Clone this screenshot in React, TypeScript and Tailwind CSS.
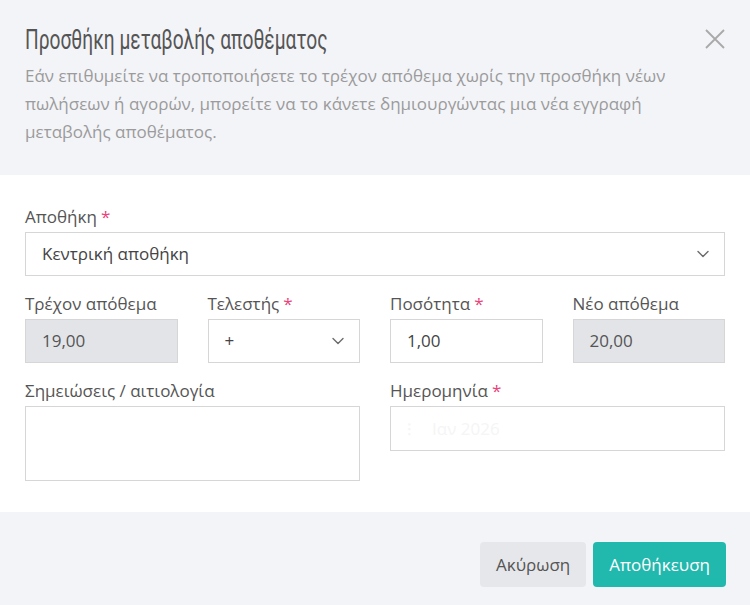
import React from "react";

const Star = () => <span className="text-[#e8437a] ml-[4px]">*</span>;

const Chevron = () => (
  <svg width="14" height="14" viewBox="0 0 14 14" fill="none" stroke="#6b6b6b" strokeWidth="1.4" strokeLinecap="round" strokeLinejoin="round">
    <path d="M2 4.5 L7 9.5 L12 4.5" />
  </svg>
);

export default function App() {
  return (
    <div className="w-[750px] h-[605px] flex flex-col bg-white font-['Open_Sans',sans-serif] text-[17px]">
      <div className="bg-[#f3f4f8] px-[25px] pt-[24px] pb-[29px] h-[175px]">
        <div className="flex items-start justify-between">
          <h1 className="font-['Roboto',sans-serif] text-[28px] leading-[32px] text-[#555555] scale-x-[0.685] origin-left whitespace-nowrap">
            Προσθήκη μεταβολής αποθέματος
          </h1>
          <svg width="24" height="24" viewBox="0 0 24 24" fill="none" stroke="#a9a9a9" strokeWidth="1.8" className="mt-[3px] mr-[-2px]">
            <path d="M3 3 L21 21 M21 3 L3 21" />
          </svg>
        </div>
        <p className="mt-[6px] text-[#9b9b9b] leading-[28px] text-[17px]">
          Εάν επιθυμείτε να τροποποιήσετε το τρέχον απόθεμα χωρίς την προσθήκη νέων πωλήσεων ή αγορών, μπορείτε να το κάνετε δημιουργώντας μια νέα εγγραφή μεταβολής αποθέματος.
        </p>
      </div>

      <div className="px-[25px] pt-[30px] pb-[31px] text-[#555555]">
        <div>
          <div className="h-6 leading-6 mb-[3px]">Αποθήκη<Star /></div>
          <div className="h-[44px] border border-[#d6d6d6] flex items-center justify-between pl-[16px] pr-[14px] text-[#444444]">
            <span>Κεντρική αποθήκη</span>
            <Chevron />
          </div>
        </div>

        <div className="grid grid-cols-4 gap-x-[30px] mt-4">
          <div>
            <div className="h-6 leading-6 mb-[3px]">Τρέχον απόθεμα</div>
            <div className="h-[44px] border border-[#d6d6d6] bg-[#e3e4e8] flex items-center pl-[16px] text-[#555555]">19,00</div>
          </div>
          <div>
            <div className="h-6 leading-6 mb-[3px]">Τελεστής<Star /></div>
            <div className="h-[44px] border border-[#d6d6d6] flex items-center justify-between pl-[16px] pr-[14px] text-[#444444]">
              <span>+</span>
              <Chevron />
            </div>
          </div>
          <div>
            <div className="h-6 leading-6 mb-[3px]">Ποσότητα<Star /></div>
            <div className="h-[44px] border border-[#d6d6d6] flex items-center pl-[16px] text-[#444444]">1,00</div>
          </div>
          <div>
            <div className="h-6 leading-6 mb-[3px]">Νέο απόθεμα</div>
            <div className="h-[44px] border border-[#d6d6d6] bg-[#e3e4e8] flex items-center pl-[16px] text-[#555555]">20,00</div>
          </div>
        </div>

        <div className="grid grid-cols-2 gap-x-[30px] mt-4">
          <div>
            <div className="h-6 leading-6 mb-[3px]">Σημειώσεις / αιτιολογία</div>
            <div className="h-[75px] border border-[#d6d6d6]"></div>
          </div>
          <div>
            <div className="h-6 leading-6 mb-[3px]">Ημερομηνία<Star /></div>
            <div className="h-[45px] border border-[#d6d6d6] flex items-center pl-[16px] text-[#f5f5f5]">
              <span className="mr-[20px]">⁝</span>
              <span>Ιαν 2026</span>
            </div>
          </div>
        </div>
      </div>

      <div className="flex-1 bg-[#f3f4f8] px-[24px] pt-[30px] flex justify-end items-start gap-[7px]">
        <button className="h-[45px] px-[16px] rounded-[4px] bg-[#e6e7ea] text-[#555555] text-[17px]">Ακύρωση</button>
        <button className="h-[45px] px-[16px] rounded-[4px] bg-[#21b8ae] text-white text-[17px]">Αποθήκευση</button>
      </div>
    </div>
  );
}
